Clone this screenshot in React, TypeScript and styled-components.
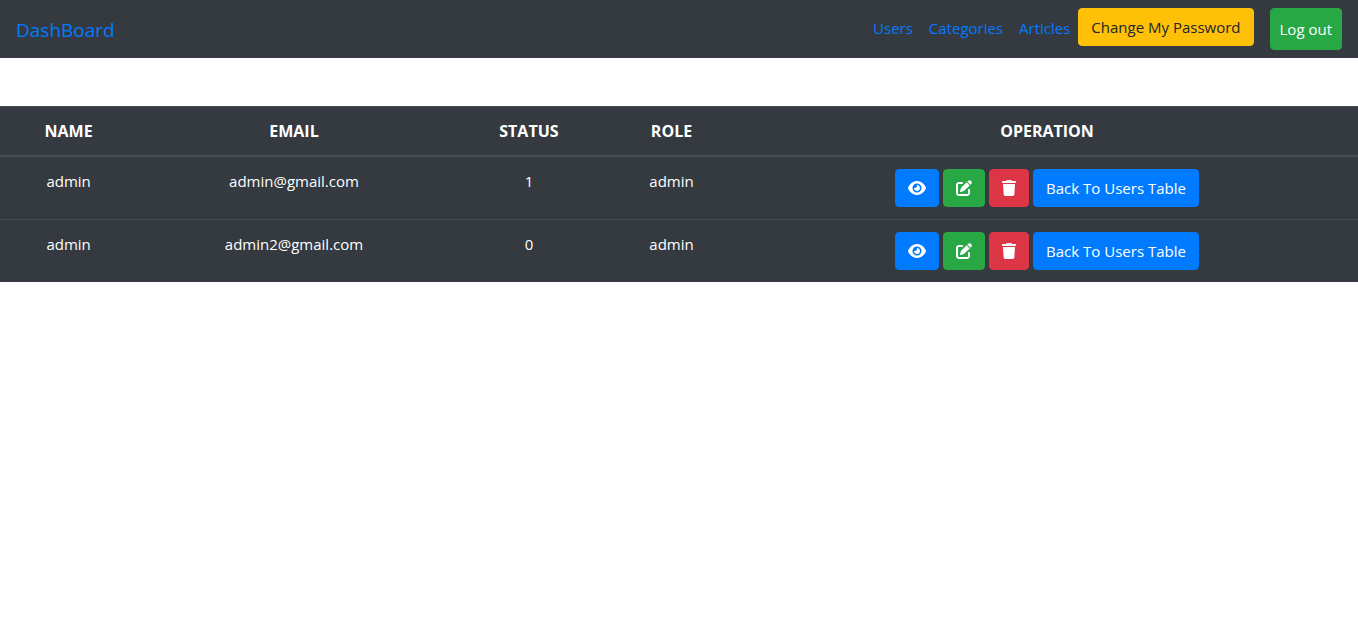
import React from "react";
import styled, { createGlobalStyle } from "styled-components";
import { FaEye, FaPenToSquare, FaTrash } from "react-icons/fa6";

const GlobalStyle = createGlobalStyle`
  *, *::before, *::after { box-sizing: border-box; }
  body {
    margin: 0;
    background: #fff;
    color: #212529;
    font-family: "Segoe UI", "Open Sans", "Noto Sans", sans-serif;
    font-size: 15px;
    line-height: 24px;
  }
`;

const tones = {
  primary: { background: "#007bff", color: "#fff" },
  success: { background: "#28a745", color: "#fff" },
  danger: { background: "#dc3545", color: "#fff" },
  warning: { background: "#ffc107", color: "#212529" },
};

type Tone = keyof typeof tones;

const Navbar = styled.nav`
  display: flex;
  align-items: center;
  justify-content: space-between;
  padding: 8px 16px;
  background: #343a40;
`;

const Brand = styled.a`
  padding: 6px 0 4px;
  color: #007bff;
  font-size: 19px;
  line-height: 32px;
  text-decoration: none;
`;

const NavList = styled.ul`
  display: flex;
  align-items: flex-start;
  margin: 0;
  padding: 0;
  list-style: none;
`;

const NavLink = styled.a`
  display: block;
  padding: 8px;
  color: #007bff;
  text-decoration: none;
`;

const Button = styled.button<{ $tone: Tone; $size?: "nav" }>`
  display: flex;
  align-items: center;
  justify-content: center;
  padding: ${({ $size }) => ($size === "nav" ? "8px 9px" : "6px 12px")};
  border: 1px solid ${({ $tone }) => tones[$tone].background};
  border-radius: 4px;
  background: ${({ $tone }) => tones[$tone].background};
  color: ${({ $tone }) => tones[$tone].color};
  font: inherit;
  white-space: nowrap;
  cursor: pointer;
`;

const IconBox = styled.span<{ $width: number }>`
  display: flex;
  width: ${({ $width }) => $width}px;
  height: 24px;
  align-items: center;

  svg {
    width: 100%;
    height: 16px;
  }
`;

const LogoutItem = styled.li`
  margin-left: 16px;
`;

const UsersTable = styled.table`
  width: 100%;
  margin-top: 48px;
  border-collapse: collapse;
  table-layout: fixed;
  background: #343a40;
  color: #fff;
  text-align: center;
`;

const Column = styled.col<{ $share: number }>`
  width: ${({ $share }) => $share}%;
`;

const HeadCell = styled.th`
  padding: 12px;
  border-top: 1px solid #454d55;
  border-bottom: 2px solid #454d55;
  font-size: 16px;
  font-weight: 700;
`;

const Cell = styled.td`
  padding: 12px;
  border-top: 1px solid #454d55;
  vertical-align: top;
`;

const Actions = styled.div`
  display: flex;
  justify-content: center;
  gap: 4px;
`;

const columns = [
  { title: "NAME", share: 10.1 },
  { title: "EMAIL", share: 23.1 },
  { title: "STATUS", share: 11.5 },
  { title: "ROLE", share: 9.5 },
  { title: "OPERATION", share: 45.8 },
];

const users = [
  { name: "admin", email: "admin@gmail.com", status: 1, role: "admin" },
  { name: "admin", email: "admin2@gmail.com", status: 0, role: "admin" },
];

export default function App() {
  return (
    <>
      <GlobalStyle />
      <Navbar>
        <Brand href="#">DashBoard</Brand>
        <NavList>
          <li><NavLink href="#users">Users</NavLink></li>
          <li><NavLink href="#categories">Categories</NavLink></li>
          <li><NavLink href="#articles">Articles</NavLink></li>
          <li><Button type="button" $tone="warning">Change My Password</Button></li>
          <LogoutItem>
            <Button type="button" $tone="success" $size="nav">Log out</Button>
          </LogoutItem>
        </NavList>
      </Navbar>
      <UsersTable>
        <colgroup>
          {columns.map((c) => <Column key={c.title} $share={c.share} />)}
        </colgroup>
        <thead>
          <tr>
            {columns.map((c) => <HeadCell key={c.title} scope="col">{c.title}</HeadCell>)}
          </tr>
        </thead>
        <tbody>
          {users.map((user) => (
            <tr key={user.email}>
              <Cell>{user.name}</Cell>
              <Cell>{user.email}</Cell>
              <Cell>{user.status}</Cell>
              <Cell>{user.role}</Cell>
              <Cell>
                <Actions>
                  <Button type="button" $tone="primary" aria-label="View">
                    <IconBox $width={18}><FaEye /></IconBox>
                  </Button>
                  <Button type="button" $tone="success" aria-label="Edit">
                    <IconBox $width={16}><FaPenToSquare /></IconBox>
                  </Button>
                  <Button type="button" $tone="danger" aria-label="Delete">
                    <IconBox $width={14}><FaTrash /></IconBox>
                  </Button>
                  <Button type="button" $tone="primary">Back To Users Table</Button>
                </Actions>
              </Cell>
            </tr>
          ))}
        </tbody>
      </UsersTable>
    </>
  );
}
